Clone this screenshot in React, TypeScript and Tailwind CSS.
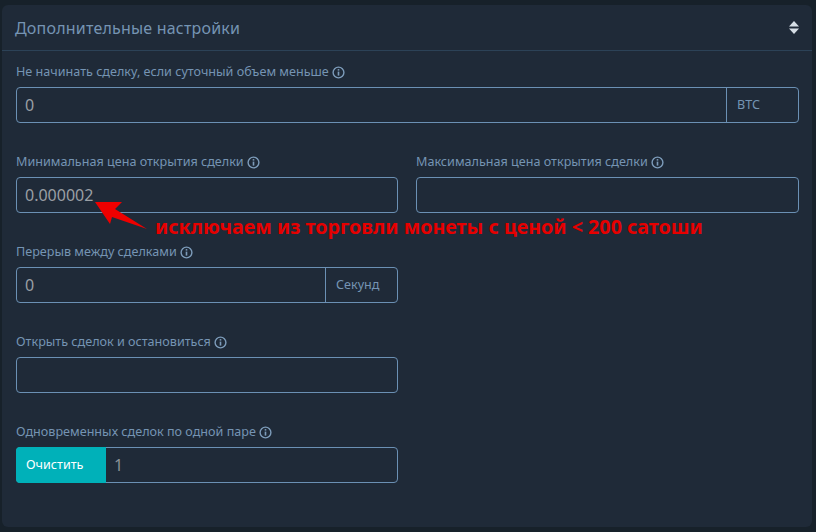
import { type ReactNode } from 'react'

function InfoIcon() {
  return (
    <svg width="13" height="13" viewBox="0 0 13 13" fill="none" className="shrink-0 ml-[3px]">
      <circle cx="6.5" cy="6.5" r="5.4" stroke="#7d9cba" strokeWidth="1.4" />
      <rect x="5.7" y="5.6" width="1.6" height="4" fill="#7d9cba" />
      <rect x="5.7" y="3.1" width="1.6" height="1.5" fill="#7d9cba" />
    </svg>
  )
}

function Label({ text }: { text: string }) {
  return (
    <div className="flex items-center h-[18px] mb-[6px] text-[12.6px] leading-[18px] text-[#7594b3] whitespace-nowrap">
      {text}
      <InfoIcon />
    </div>
  )
}

function Field({ label, value, suffix, suffixWidth }: { label: string; value?: string; suffix?: string; suffixWidth?: string }) {
  return (
    <div>
      <Label text={label} />
      <div className="flex h-9 rounded border border-[#6b90b4]">
        <div className="flex-1 flex items-center pl-2 text-[16px] text-[#9a9fa4]">{value}</div>
        {suffix && (
          <div className={`flex items-center pl-[10px] border-l border-[#6b90b4] text-[12.6px] text-[#7594b3] ${suffixWidth}`}>
            {suffix}
          </div>
        )}
      </div>
    </div>
  )
}

function Row({ children }: { children: ReactNode }) {
  return <div className="grid grid-cols-[382px_383px] gap-x-[18px]">{children}</div>
}

export default function App() {
  return (
    <div className="relative w-[816px] h-[532px] bg-[#17212a] pt-[5px] pl-[2px] pr-1 font-['Noto_Sans','Open_Sans',sans-serif]">
      <div className="h-[522px] bg-[#1f2a38] rounded-md">
        <div className="flex items-center justify-between h-[46px] pl-[13px] pr-[13px] border-b border-[#2c4257]">
          <span className="text-[16px] tracking-[0.2px] text-[#7594b3]">Дополнительные настройки</span>
          <svg width="10" height="13" viewBox="0 0 10 13" fill="#d5dde5">
            <path d="M5 0 L10 5.6 H0 Z" />
            <path d="M5 13 L10 7.4 H0 Z" />
          </svg>
        </div>

        <div className="flex flex-col gap-[30px] pl-[14px] pt-[12px]">
          <div className="w-[783px]">
            <Field label="Не начинать сделку, если суточный объем меньше" value="0" suffix="BTC" suffixWidth="w-[72px]" />
          </div>
          <Row>
            <Field label="Минимальная цена открытия сделки" value="0.000002" />
            <Field label="Максимальная цена открытия сделки" />
          </Row>
          <Row>
            <Field label="Перерыв между сделками" value="0" suffix="Секунд" suffixWidth="w-[72px]" />
          </Row>
          <Row>
            <Field label="Открыть сделок и остановиться" />
          </Row>
          <Row>
            <div>
              <Label text="Одновременных сделок по одной паре" />
              <div className="flex h-9 rounded border border-[#6b90b4]">
                <button className="w-[90px] -m-px mr-0 h-9 rounded-l bg-[#00b1b9] text-left pl-[10px] text-[12.6px] text-white">Очистить</button>
                <div className="flex-1 flex items-center pl-2 text-[16px] text-[#8b9197]">1</div>
              </div>
            </div>
          </Row>
        </div>
      </div>

      {/* red annotation drawn over the form */}
      <svg width="60" height="32" viewBox="0 0 60 32" className="absolute left-[92px] top-[200px]">
        <path d="M3 2 L30 2 L23 9 L55 29 L20 17 L18 24 Z" fill="#ee0000" />
      </svg>
      <span className="absolute left-[155px] top-[213px] text-[19.7px] leading-[28px] font-bold text-[#e60000] whitespace-nowrap">
        исключаем из торговли монеты с ценой &lt; 200 сатоши
      </span>
    </div>
  )
}
